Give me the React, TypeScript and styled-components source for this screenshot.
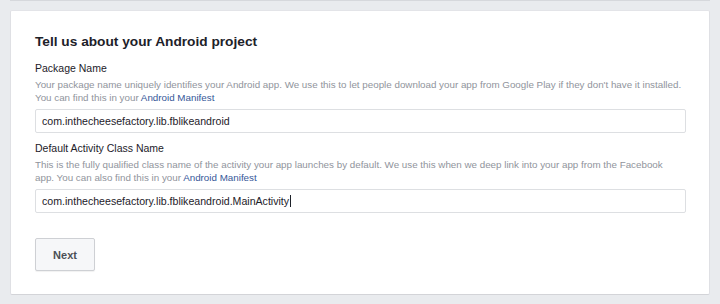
import React from 'react';
import styled, { createGlobalStyle } from 'styled-components';

const GlobalStyle = createGlobalStyle`
  html, body {
    margin: 0;
    padding: 0;
    background: #e9ebee;
    font-family: 'Liberation Sans', Arial, Helvetica, sans-serif;
    -webkit-font-smoothing: antialiased;
  }
`;

const Page = styled.div`
  width: 720px;
  height: 304px;
  padding: 0 10px;
  box-sizing: border-box;
  overflow: hidden;
`;

const PrevEdge = styled.div`
  height: 1px;
  background: #d6d8dc;
  margin-bottom: 9px;
`;

const Card = styled.section`
  background: #fff;
  border: 1px solid;
  border-color: #e3e4e8 #dfe0e4 #d3d4d8;
  border-radius: 2px;
  padding: 22px 23px 23px 24px;
  display: flex;
  flex-direction: column;
`;

const Title = styled.h2`
  margin: 0 0 12px;
  font-size: 13.7px;
  line-height: 17px;
  font-weight: bold;
  color: #1d2129;
`;

const Field = styled.div<{ $first?: boolean }>`
  display: flex;
  flex-direction: column;
  margin-top: ${({ $first }) => ($first ? 0 : 9)}px;
`;

const Label = styled.label`
  font-size: 10.5px;
  line-height: 13px;
  color: #1d2129;
`;

const Help = styled.p`
  margin: 3px 0 5px;
  font-size: 9.8px;
  line-height: 13px;
  color: #90949c;
  white-space: nowrap;
`;

const Link = styled.a`
  color: #365899;
  text-decoration: none;
`;

const TextField = styled.div`
  height: 24px;
  box-sizing: border-box;
  border: 1px solid #dddfe2;
  border-radius: 2px;
  padding: 0 6px;
  display: flex;
  align-items: center;
  font-size: 10.6px;
  color: #1d2129;
  white-space: nowrap;
`;

const Caret = styled.span`
  display: inline-block;
  width: 1px;
  height: 12px;
  background: #1d2129;
  margin-left: 1px;
`;

const Actions = styled.div`
  display: flex;
  margin-top: 25px;
`;

const Button = styled.button`
  width: 60px;
  height: 33px;
  box-sizing: border-box;
  border: 1px solid #ced0d4;
  border-radius: 2px;
  background: #f6f7f9;
  box-shadow: 0 1px 1px rgba(0, 0, 0, 0.06);
  font-family: inherit;
  font-size: 11px;
  font-weight: bold;
  color: #4b4f56;
  padding: 0;
  cursor: pointer;
`;

export default function App() {
  return (
    <>
      <GlobalStyle />
      <Page>
        <PrevEdge />
        <Card>
          <Title>Tell us about your Android project</Title>

          <Field $first>
            <Label>Package Name</Label>
            <Help>
              Your package name uniquely identifies your Android app. We use this to let people download
              your app from Google Play if they don't have it installed.
              <br />
              You can find this in your <Link href="#">Android Manifest</Link>
            </Help>
            <TextField>com.inthecheesefactory.lib.fblikeandroid</TextField>
          </Field>

          <Field>
            <Label>Default Activity Class Name</Label>
            <Help>
              This is the fully qualified class name of the activity your app launches by default. We use
              this when we deep link into your app from the Facebook
              <br />
              app. You can also find this in your <Link href="#">Android Manifest</Link>
            </Help>
            <TextField>
              com.inthecheesefactory.lib.fblikeandroid.MainActivity
              <Caret />
            </TextField>
          </Field>

          <Actions>
            <Button>Next</Button>
          </Actions>
        </Card>
      </Page>
    </>
  );
}
